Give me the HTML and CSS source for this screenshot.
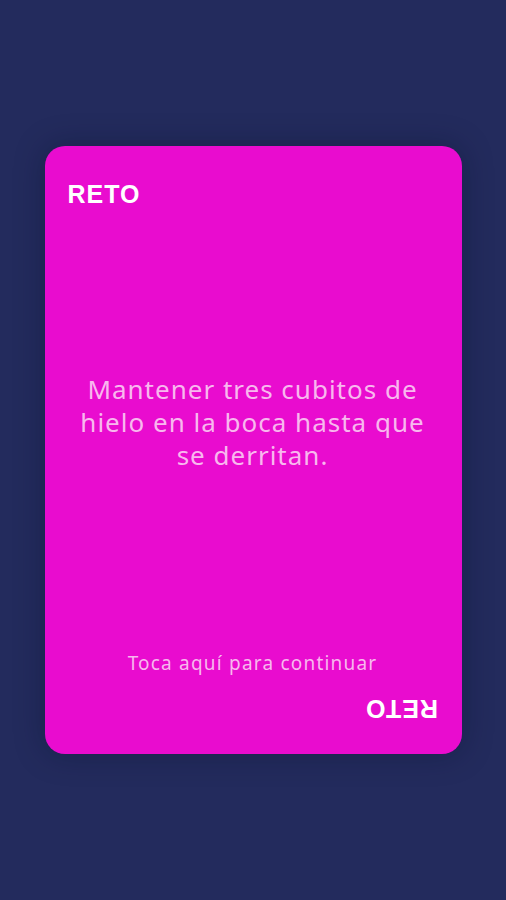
FILE: index.html
```html
<!DOCTYPE html>
<html lang="es">
<head>
    <meta charset="UTF-8">
    <meta name="viewport" content="width=device-width, initial-scale=1.0">
    <title>Reto</title>
    <link rel="stylesheet" href="styles.css">
</head>
<body>
    <div class="screen">
        <div class="card">
            <div class="label">RETO</div>
            <div class="prompt">
                <p>Mantener tres cubitos de hielo en la boca hasta que se derritan.</p>
            </div>
            <div class="hint">Toca aquí para continuar</div>
            <div class="label label-flip">RETO</div>
        </div>
    </div>
</body>
</html>
```

FILE: styles.css
```css
body {
    margin: 0;
    background-color: #232b5d;
    font-family: "Noto Sans", sans-serif;
}
.screen {
    height: 900px;
    display: flex;
    align-items: center;
    justify-content: center;
}
.card {
    width: 417px;
    height: 608px;
    box-sizing: border-box;
    padding: 33px 24px 30px 23px;
    background-color: #e90ccf;
    border-radius: 20px;
    box-shadow: 0 0 30px rgba(10, 14, 40, 0.35);
    display: flex;
    flex-direction: column;
}
.label {
    color: white;
    font-family: "Liberation Sans", Arial, sans-serif;
    font-weight: bold;
    font-size: 25px;
    letter-spacing: 1px;
    line-height: 30px;
}
.label-flip {
    align-self: flex-end;
    transform: rotate(180deg);
}
.prompt {
    flex: 1;
    display: flex;
    align-items: center;
    justify-content: center;
    padding-bottom: 14px;
}
.prompt p {
    margin: 0;
    max-width: 350px;
    text-align: center;
    color: #f8b8ee;
    font-size: 26px;
    letter-spacing: 1px;
    line-height: 33px;
}
.hint {
    text-align: center;
    color: #f8b8ee;
    font-size: 19px;
    letter-spacing: 1.2px;
    margin-bottom: 18px;
}
```
